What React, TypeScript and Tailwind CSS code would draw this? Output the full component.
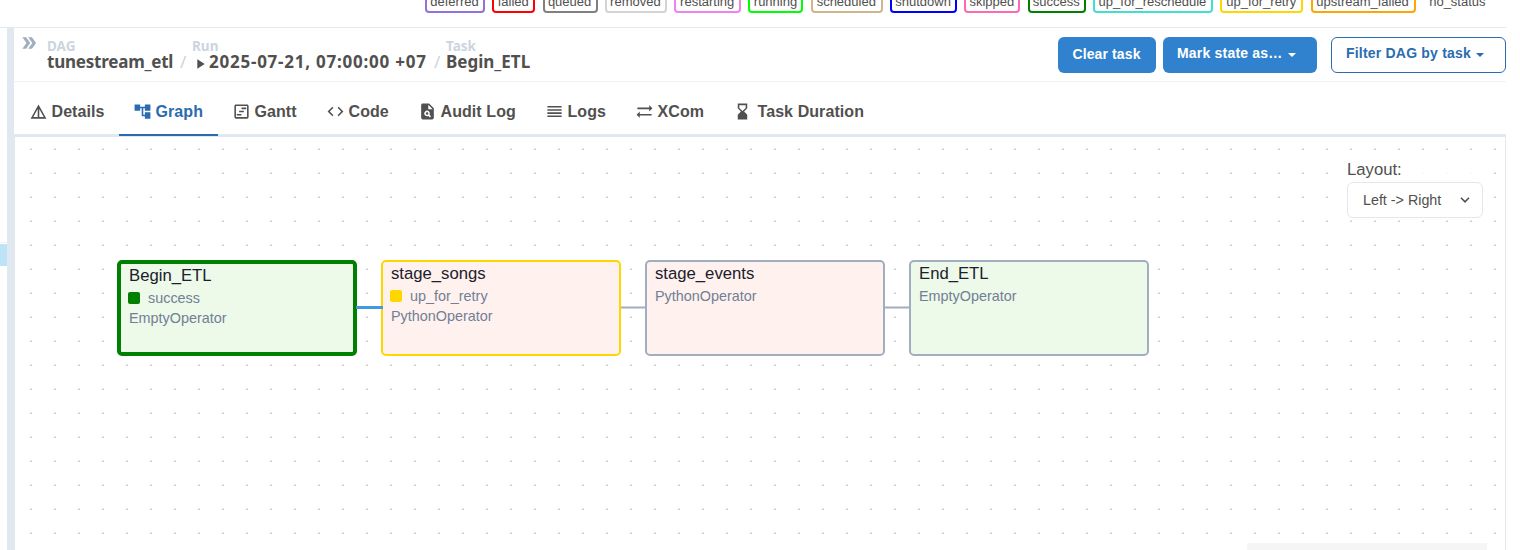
import type { ReactNode } from 'react';
import {
  MdAccountTree,
  MdCode,
  MdDetails,
  MdDoubleArrow,
  MdHourglassBottom,
  MdOutlineViewTimeline,
  MdPlagiarism,
  MdPlayArrow,
  MdReorder,
  MdSyncAlt,
} from 'react-icons/md';

const states = [
  { name: 'deferred', box: 'w-[60px] border-[#9370db]' },
  { name: 'failed', box: 'w-[43px] border-[#ff0000]' },
  { name: 'queued', box: 'w-[55px] border-[#808080]' },
  { name: 'removed', box: 'w-[62px] border-[#d3d3d3]' },
  { name: 'restarting', box: 'w-[67px] border-[#ee82ee]' },
  { name: 'running', box: 'w-[55px] border-[#00ff00]' },
  { name: 'scheduled', box: 'w-[72px] border-[#d2b48c]' },
  { name: 'shutdown', box: 'w-[67px] border-[#0000ff]' },
  { name: 'skipped', box: 'w-[56px] border-[#ff69b4]' },
  { name: 'success', box: 'w-[58px] border-[#008000]' },
  { name: 'up_for_reschedule', box: 'w-[120px] border-[#40e0d0]' },
  { name: 'up_for_retry', box: 'w-[83px] border-[#ffd700]' },
  { name: 'upstream_failed', box: 'w-[105px] border-[#ffa500]' },
  { name: 'no_status', box: 'w-[70px] border-transparent' },
];

function Tab({ icon, label, className, active }: { icon: ReactNode; label: string; className: string; active?: boolean }) {
  return (
    <div
      className={`flex h-[51px] shrink-0 items-center gap-1 whitespace-pre border-b-2 pt-1 pl-[14.5px] text-base font-bold tracking-[0.08px] ${className} ${
        active ? 'border-[#2b6cb0] text-[#2b6cb0]' : 'border-transparent'
      }`}
    >
      <span className="-ml-px flex shrink-0 text-[19px]">{icon}</span>
      <span className="pt-px">{label}</span>
    </div>
  );
}

function Caret() {
  return (
    <svg width="8" height="4" viewBox="0 0 8 4" className="mt-[3px] ml-[5.5px]" fill="currentColor">
      <path d="M0 0h8L4 4z" />
    </svg>
  );
}

function Crumb({ title, className, children }: { title: string; className: string; children: ReactNode }) {
  return (
    <div className={className}>
      <div className="h-[14px] text-[13.5px] leading-[14px] text-[#cbd5e0]">{title}</div>
      <div className="flex h-[18px] text-[17px] leading-[18px]">{children}</div>
    </div>
  );
}

function Node({
  name,
  operator,
  box,
  state,
  swatch,
}: {
  name: string;
  operator: string;
  box: string;
  state?: string;
  swatch?: string;
}) {
  return (
    <div className={`absolute rounded-[5px] pl-2 text-[14.4px] leading-5 text-[#718096] ${box}`}>
      <div className="h-6 text-[16.7px] leading-6 text-[#1a202c]">{name}</div>
      {state && (
        <div className="-ml-px flex h-[20px] items-center">
          <span className={`mr-2 mb-px size-3 rounded-[2px] ${swatch}`} />
          {state}
        </div>
      )}
      <div>{operator}</div>
    </div>
  );
}

export default function App() {
  return (
    <div className="flex h-[550px] w-[1520px] flex-col overflow-hidden bg-white font-['Liberation_Sans',Arial,sans-serif] text-[#51504f]">
      <div className="flex h-[28px] w-[1506px] shrink-0 items-start gap-[7.3px] border-b border-[#e2e8f0] pl-[425px]">
        {states.map((s) => (
          <span
            key={s.name}
            className={`-mt-[11px] flex h-[24px] shrink-0 items-center justify-center rounded-[4px] border-2 pr-px text-[13px] leading-none ${s.box}`}
          >
            {s.name}
          </span>
        ))}
      </div>

      <div className="flex min-h-0 flex-1">
        <div className="w-[7px] shrink-0 pt-[214px]">
          <div className="h-px bg-[#edf0f4]" />
          <div className="mt-px h-[22px] bg-[#bee3f8]" />
        </div>
        <div className="w-[7px] shrink-0 bg-[#e2e8f0]" />

        <div className="flex w-[1492px] shrink-0 flex-col">
          <div className="flex h-[54px] shrink-0 border-b border-[#edf2f7]">
            <MdDoubleArrow className="mt-[5px] ml-[5px] size-5 shrink-0 text-[#a0aec0]" />
            <div className="ml-[8px] flex pt-[11px] font-['Noto_Sans','Open_Sans',sans-serif] font-bold">
              <Crumb title="DAG" className="w-[145px]">
                <span className="w-[126px] whitespace-nowrap tracking-[-0.22px]">tunestream_etl</span>
                <span className="ml-[7px] font-normal text-[#cbd5e0]">/</span>
              </Crumb>
              <Crumb title="Run" className="w-[254px]">
                <MdPlayArrow className="mt-[3px] mr-px size-4" />
                <span className="w-[218px] whitespace-nowrap tracking-[0.76px]">2025-07-21, 07:00:00 +07</span>
                <span className="ml-[7px] font-normal text-[#cbd5e0]">/</span>
              </Crumb>
              <Crumb title="Task" className="">
                Begin_ETL
              </Crumb>
            </div>
            <div className="ml-auto flex pt-[9px] text-[14px] font-bold tracking-[0.12px]">
              <button className="flex h-9 w-[98px] items-center justify-center rounded-md bg-[#3182ce] pr-px pb-px text-white">Clear task</button>
              <button className="ml-[7px] flex h-9 w-[154px] items-center rounded-md bg-[#3182ce] pb-[3px] pl-[14px] tracking-[0.2px] text-white">
                Mark state as…
                <Caret />
              </button>
              <button className="ml-[14px] flex h-9 w-[175px] items-center rounded-md border border-[#2b6cb0] pb-[3px] pl-[14px] tracking-[0.2px] text-[#2b6cb0]">
                Filter DAG by task
                <Caret />
              </button>
            </div>
          </div>

          <div className="flex h-[55px] shrink-0 border-b-[3px] border-[#e2e8f0] pt-[3px] pl-px">
            <Tab icon={<MdDetails />} label="Details" className="w-[104px]" />
            <Tab icon={<MdAccountTree />} label="Graph" className="w-[99px]" active />
            <Tab icon={<MdOutlineViewTimeline />} label="Gantt" className="w-[94px]" />
            <Tab icon={<MdCode />} label="Code" className="w-[92px]" />
            <Tab icon={<MdPlagiarism />} label="Audit Log" className="w-[127px]" />
            <Tab icon={<MdReorder />} label="Logs" className="w-[90px]" />
            <Tab icon={<MdSyncAlt />} label="XCom" className="w-[98px]" />
            <Tab icon={<MdHourglassBottom className="mr-0.5" />} label="Task Duration" className="w-[160px]" />
          </div>

          <div className="relative min-h-0 flex-1 overflow-hidden border-x border-[#e2e8f0]">
            <svg className="absolute inset-0 size-full">
              <defs>
                <pattern id="dots" x="15" y="11" width="24" height="24" patternUnits="userSpaceOnUse">
                  <rect width="2" height="1" fill="#e4e4e4" />
                  <rect y="1" width="2" height="1" fill="#d0d0d0" />
                </pattern>
              </defs>
              <rect width="100%" height="100%" fill="url(#dots)" />
              <path d="M606 170.5h26M869 170.5h26" stroke="#a0aec0" strokeWidth="2" />
            </svg>
            <Node
              name="Begin_ETL"
              operator="EmptyOperator"
              state="success"
              swatch="bg-[#008000]"
              box="left-[102px] top-[123px] h-[96px] w-[240px] border-4 border-[#008000] bg-[#edf9e9]"
            />
            <Node
              name="stage_songs"
              operator="PythonOperator"
              state="up_for_retry"
              swatch="bg-[#ffd700]"
              box="left-[366px] top-[123px] h-[96px] w-[240px] border-2 border-[#ffd700] bg-[#fff1ee]"
            />
            <Node
              name="stage_events"
              operator="PythonOperator"
              box="left-[630px] top-[123px] h-[96px] w-[240px] border-2 border-[#a0aec0] bg-[#fff1ee]"
            />
            <Node
              name="End_ETL"
              operator="EmptyOperator"
              box="left-[894px] top-[123px] h-[96px] w-[240px] border-2 border-[#a0aec0] bg-[#edf9e9]"
            />
            <svg className="absolute top-[169px] left-[341px]" width="27" height="4">
              <path d="M0 1.5h27" stroke="#4299e1" strokeWidth="3" />
            </svg>
            <div className="absolute top-[21px] left-[1332px] w-[136px] bg-white/85 pb-px">
              <div className="text-[16.7px] leading-6">Layout:</div>
              <div className="flex h-9 items-center justify-between rounded-md border border-[#e2e8f0] bg-white pr-[12px] pl-[15px] text-[14.3px]">
                <span className="pt-px">Left -&gt; Right</span>
                <svg width="10" height="6" viewBox="0 0 10 6" fill="none" stroke="currentColor" strokeWidth="1.6">
                  <path d="M1 .8l4 4 4-4" />
                </svg>
              </div>
            </div>
            <div className="absolute top-[406px] left-[1232px] h-[10px] w-[240px] bg-[#f5f5f5]" />
          </div>
        </div>
      </div>
    </div>
  );
}
